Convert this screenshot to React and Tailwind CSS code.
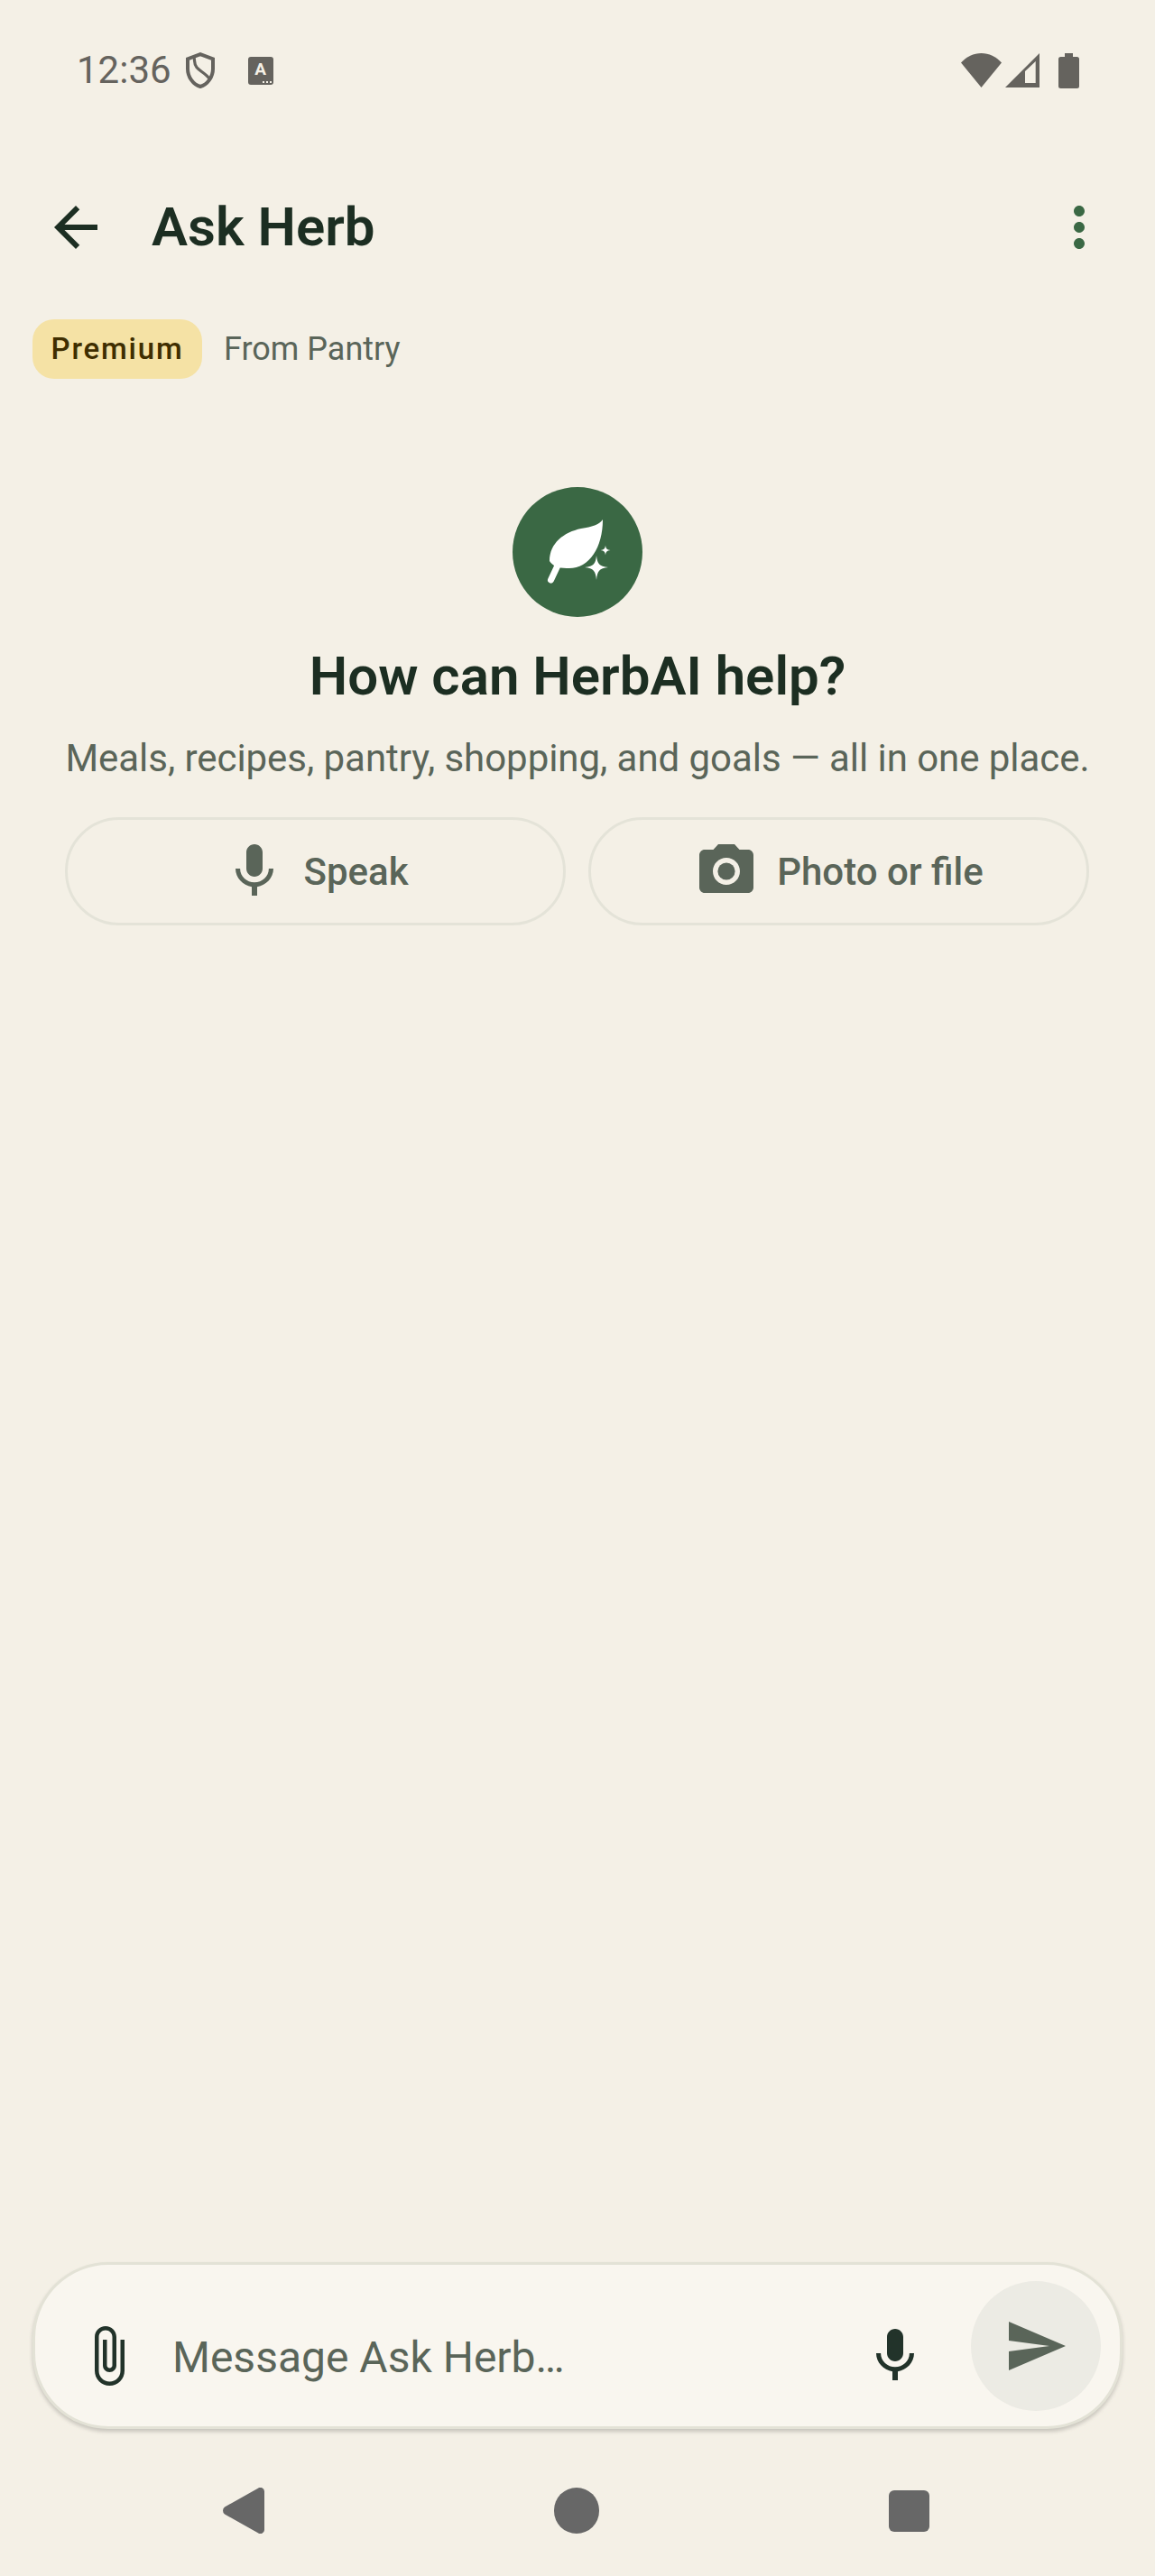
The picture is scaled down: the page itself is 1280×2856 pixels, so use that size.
import React from 'react';

function Icon({ d, className }) {
  return (
    <svg viewBox="0 0 24 24" fill="currentColor" className={className}>
      <path d={d} />
    </svg>
  );
}

const micPath = 'M12 14c1.66 0 3-1.34 3-3V5c0-1.66-1.34-3-3-3S9 3.34 9 5v6c0 1.66 1.34 3 3 3zm5.3-3c0 3-2.54 5.1-5.3 5.1S6.7 14 6.7 11H5c0 3.41 2.72 6.23 6 6.72V21h2v-3.28c3.28-.48 6-3.3 6-6.72h-1.7z';
const backPath = 'M20 11H7.83l5.59-5.59L12 4l-8 8 8 8 1.41-1.41L7.83 13H20v-2z';
const morePath = 'M12 8c1.1 0 2-.9 2-2s-.9-2-2-2-2 .9-2 2 .9 2 2 2zm0 2c-1.1 0-2 .9-2 2s.9 2 2 2 2-.9 2-2-.9-2-2-2zm0 6c-1.1 0-2 .9-2 2s.9 2 2 2 2-.9 2-2-.9-2-2-2z';
const clipPath = 'M16.5 6v11.5c0 2.21-1.79 4-4 4s-4-1.79-4-4V5c0-1.38 1.12-2.5 2.5-2.5s2.5 1.12 2.5 2.5v10.5c0 .55-.45 1-1 1s-1-.45-1-1V6H10v9.5c0 1.38 1.12 2.5 2.5 2.5s2.5-1.12 2.5-2.5V5c0-2.21-1.79-4-4-4S7 2.79 7 5v12.5c0 3.04 2.46 5.5 5.5 5.5s5.5-2.46 5.5-5.5V6h-1.5z';
const sendPath = 'M2.01 21L23 12 2.01 3 2 10l15 2-15 2z';

function CameraIcon({ className }) {
  return (
    <svg viewBox="0 0 24 24" fill="currentColor" className={className}>
      <circle cx="12" cy="12" r="3.2" />
      <path d="M9 2L7.17 4H4c-1.1 0-2 .9-2 2v12c0 1.1.9 2 2 2h16c1.1 0 2-.9 2-2V6c0-1.1-.9-2-2-2h-3.17L15 2H9zm3 15c-2.76 0-5-2.24-5-5s2.24-5 5-5 5 2.24 5 5-2.24 5-5 5z" />
    </svg>
  );
}

function StatusBar() {
  return (
    <div className="flex h-[48px] items-center justify-between pl-[85px] pr-[84px] mt-[54px] text-[#65635e]">
      <div className="flex items-center">
        <span className="text-[42px] leading-[48px] text-[#65635e]">12:36</span>
        <svg viewBox="0 0 24 24" fill="none" stroke="currentColor" strokeWidth="2" className="w-[48px] h-[48px] ml-[8px]">
          <path d="M12 3.100L5 5.700v5.400c0 4.500 3 8.800 7 9.900 4-1.100 7-5.400 7-9.900V5.700z" />
          <path d="M8.500 4.800c.6 2-.2 3.500 1.500 5.600 1.600 2 5 3.200 7 6.200" strokeWidth="1.600" />
        </svg>
        <div className="relative flex justify-center w-[28px] h-[31px] ml-[29px] rounded-[3px] bg-[#65635e]">
          <span className="text-[19px] leading-[27px] font-bold text-[#f4f0e6]">A</span>
          <div className="absolute bottom-[2px] right-[2px] flex gap-[2px]">
            <div className="w-[2px] h-[2px] bg-[#f4f0e6]" />
            <div className="w-[2px] h-[2px] bg-[#f4f0e6]" />
            <div className="w-[2px] h-[2px] bg-[#f4f0e6]" />
          </div>
        </div>
      </div>
      <div className="flex items-center">
        <svg viewBox="0 0 45 38" fill="currentColor" className="w-[45px] h-[38px]">
          <path d="M22.500 38L0 10.500C6 4 14 0 22.500 0S39 4 45 10.500z" />
        </svg>
        <svg viewBox="0 0 38 38" fill="currentColor" fillRule="evenodd" className="w-[38px] h-[38px] ml-[4px]">
          <path d="M0 38L38 0v38zM33.700 9L22 20v13h11.700z" />
        </svg>
        <svg viewBox="0 0 23 39" fill="currentColor" className="w-[23px] h-[39px] ml-[21px]">
          <path d="M7 0h9v4h4.500A2.500 2.500 0 0 1 23 6.500v30a2.500 2.500 0 0 1-2.500 2.500h-18A2.500 2.500 0 0 1 0 36.500v-30A2.500 2.500 0 0 1 2.500 4H7z" />
        </svg>
      </div>
    </div>
  );
}

function LeafBadge() {
  return (
    <div className="w-[144px] h-[144px] rounded-full bg-[#3a6844] mx-auto">
      <svg viewBox="0 0 144 144" fill="#ffffff" className="w-[144px] h-[144px]">
        <path d="M100 36C96 42 88 44 76 46C57 50 41 62 41 82C44 87 50 90 60 90C84 92 100 68 100 36Z" />
        <path d="M42.500 103L50 87" stroke="#ffffff" strokeWidth="7" strokeLinecap="round" />
        <path d="M93 76C94 85 96 88 106 89C96 90 94 93 93 103C92 93 90 90 80 89C90 88 92 85 93 76Z" />
        <path d="M103 64.500C103.500 68.500 104.500 69.500 108.500 70C104.500 70.500 103.500 71.500 103 75.500C102.500 71.500 101.500 70.500 97.500 70C101.500 69.500 102.500 68.500 103 64.500Z" />
      </svg>
    </div>
  );
}

export default function App() {
  return (
    <div className="flex flex-col h-[2856px] w-[1280px] bg-[#f4f0e6] font-['Roboto',sans-serif] overflow-hidden">
      <StatusBar />

      <div className="flex items-center justify-between h-[72px] mt-[114px] pl-[48px] pr-[48px]">
        <div className="flex items-center gap-[48px]">
          <Icon d={backPath} className="w-[72px] h-[72px] text-[#1c2e22]" />
          <h1 className="text-[60px] leading-[72px] font-semibold text-[#1c2e22]">Ask Herb</h1>
        </div>
        <Icon d={morePath} className="w-[72px] h-[72px] text-[#3a6844]" />
      </div>

      <div className="flex items-center gap-[24px] mt-[66px] px-[36px]">
        <span className="flex items-center h-[66px] w-[188px] justify-center rounded-[24px] bg-[#f5e2a5] text-[33px] font-[550] tracking-[1.8px] text-[#3f2e00]">Premium</span>
        <span className="text-[36px] text-[#5a6559]">From Pantry</span>
      </div>

      <div className="mt-[120px]">
        <LeafBadge />
        <h2 className="mt-[30px] text-[60px] leading-[72px] font-semibold text-center text-[#1c2e22]">How can HerbAI help?</h2>
        <p className="mt-[25px] text-[42px] leading-[60px] tracking-[-0.05px] text-center text-[#5a6559]">Meals, recipes, pantry, shopping, and goals — all in one place.</p>
        <div className="flex gap-[25px] mt-[35px] pl-[72px] pr-[73px]">
          <button className="flex flex-1 items-center justify-center gap-[18px] h-[120px] rounded-[60px] border-[3px] border-[#e4e3d8] text-[42px] font-[550] text-[#5a6559]">
            <Icon d={micPath} className="w-[72px] h-[72px]" />
            Speak
          </button>
          <button className="flex flex-1 items-center justify-center gap-[20px] h-[120px] rounded-[60px] border-[3px] border-[#e4e3d8] text-[42px] font-[550] text-[#5a6559]">
            <CameraIcon className="w-[72px] h-[72px]" />
            Photo or file
          </button>
        </div>
      </div>

      <div className="flex-1" />

      <div className="flex items-center h-[185px] mx-[36px] pl-[45px] pr-[21px] rounded-[84px] border-[3px] border-[#e3e2d6] bg-[#f9f6ef] shadow-[0_3px_4px_rgba(0,0,0,0.18)]">
        <div className="flex flex-1 items-center mt-[23px]">
          <Icon d={clipPath} className="w-[72px] h-[72px] text-[#22332a]" />
          <span className="flex-1 ml-[35px] pt-[4px] text-[48px] leading-[56px] text-[#5a6559]">Message Ask Herb…</span>
          <Icon d={micPath} className="w-[72px] h-[72px] text-[#22332a]" />
        </div>
        <div className="flex items-center justify-center w-[144px] h-[144px] ml-[48px] rounded-full bg-[#ecebe4]">
          <Icon d={sendPath} className="w-[72px] h-[72px] text-[#5a6559]" />
        </div>
      </div>

      <div className="flex items-start justify-center gap-[297px] h-[163px] pt-[65px] pr-[4px] text-[#676767]">
        <div className="flex justify-center w-[72px]">
          <svg viewBox="0 0 46 51" fill="currentColor" className="w-[46px] h-[51px]">
            <path d="M2 29.500a5 5 0 0 1 0-8L38.500 1a4.500 4.500 0 0 1 7.500 3.500v42a4.500 4.500 0 0 1-7.500 3.500z" />
          </svg>
        </div>
        <div className="w-[50px] h-[51px] mx-[11px] rounded-full bg-[#676767]" />
        <div className="w-[45px] h-[46px] mt-[3px] mx-[13px] rounded-[6px] bg-[#676767]" />
      </div>
    </div>
  );
}
